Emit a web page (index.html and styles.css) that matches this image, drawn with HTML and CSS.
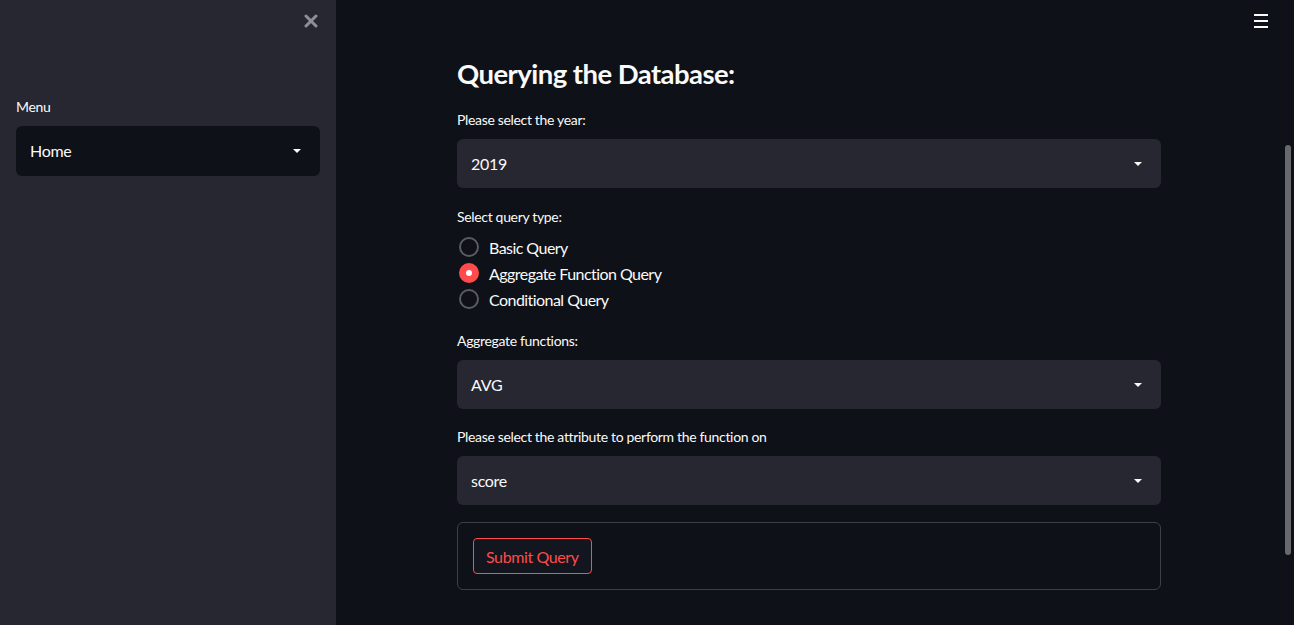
FILE: index.html
```html
<!DOCTYPE html>
<html>
<head>
<meta charset="utf-8">
<link rel="stylesheet" href="styles.css">
</head>
<body>
<div class="app">
  <aside class="sidebar">
    <div class="sidebar-top">
      <button class="close-btn" aria-label="Close sidebar">
        <svg width="14" height="14" viewBox="0 0 14 14"><path d="M2 2 L12 12 M12 2 L2 12" stroke="#8e9097" stroke-width="3" stroke-linecap="round"/></svg>
      </button>
    </div>
    <div class="field sidebar-field">
      <label class="label">Menu</label>
      <div class="select select-dark">
        <span class="select-value">Home</span>
        <span class="caret"></span>
      </div>
    </div>
  </aside>
  <main class="main">
    <div class="topbar">
      <button class="menu-btn" aria-label="Menu">
        <span></span><span></span><span></span>
      </button>
    </div>
    <div class="content">
      <h2 class="title">Querying the Database:</h2>
      <div class="field field-year">
        <label class="label">Please select the year:</label>
        <div class="select"><span class="select-value">2019</span><span class="caret"></span></div>
      </div>
      <div class="field field-radio">
        <label class="label">Select query type:</label>
        <div class="radio-group">
          <div class="radio"><span class="radio-dot"></span><span>Basic Query</span></div>
          <div class="radio checked"><span class="radio-dot"></span><span>Aggregate Function Query</span></div>
          <div class="radio"><span class="radio-dot"></span><span>Conditional Query</span></div>
        </div>
      </div>
      <div class="field">
        <label class="label">Aggregate functions:</label>
        <div class="select"><span class="select-value">AVG</span><span class="caret"></span></div>
      </div>
      <div class="field">
        <label class="label">Please select the attribute to perform the function on</label>
        <div class="select"><span class="select-value">score</span><span class="caret"></span></div>
      </div>
      <form class="form">
        <button type="button" class="submit">Submit Query</button>
      </form>
    </div>
    <div class="scroll-thumb"></div>
  </main>
</div>
</body>
</html>
```
FILE: styles.css
```css
* { box-sizing: border-box; }
html, body { margin: 0; padding: 0; height: 100%; }
body {
  font-family: "Lato", "Noto Sans", sans-serif;
  color: #fafafa;
  background: #0e1117;
  overflow: hidden;
}
.app { display: flex; height: 625px; }
.sidebar {
  width: 336px;
  flex: none;
  background: #262730;
  padding: 0 16px;
}
.sidebar-top {
  height: 97px;
  display: flex;
  justify-content: flex-end;
  align-items: flex-start;
  padding-top: 14px;
}
.close-btn {
  background: none; border: 0; padding: 0; margin-right: 2px;
  width: 14px; height: 14px; display: flex;
}
.field { display: flex; flex-direction: column; }
.label {
  font-size: 14px;
  line-height: 20px;
  height: 20px;
  margin-bottom: 9px;
  letter-spacing: -0.33px;
}
.select {
  height: 49px;
  background: #262730;
  border-radius: 6px;
  display: flex;
  align-items: center;
  justify-content: space-between;
  padding: 0 19px 0 14px;
  font-size: 16px;
  letter-spacing: -0.3px;
}
.select-dark { background: #0e1117; height: 50px; padding-bottom: 2px; }
.select-dark .caret { margin-top: 2px; }
.caret {
  width: 0; height: 0;
  border-left: 4px solid transparent;
  border-right: 4px solid transparent;
  border-top: 4px solid #fafafa;
}
.main {
  flex: 1;
  position: relative;
  display: flex;
  flex-direction: column;
  align-items: center;
  padding-right: 12px;
}
.topbar {
  align-self: stretch;
  display: flex;
  justify-content: flex-end;
  padding: 14px 14px 0 0;
  height: 57px;
}
.menu-btn {
  background: none; border: 0; padding: 0;
  width: 14px; height: 14px;
  display: flex; flex-direction: column; justify-content: space-between;
}
.menu-btn span { display: block; height: 2px; background: #fafafa; }
.content {
  width: 704px;
  display: flex;
  flex-direction: column;
}
.title {
  margin: 0 0 19px;
  font-size: 27.5px;
  line-height: 34px;
  font-weight: 700;
  letter-spacing: -0.55px;
}
.content .field { margin-bottom: 18px; }
.content .field-year { margin-bottom: 19px; }
.content .field-radio { margin-bottom: 19px; }
.content .field .label { margin-bottom: 9px; }
.radio-group { display: flex; flex-direction: column; margin-top: -2px; }
.radio {
  display: flex; align-items: center;
  height: 26px;
  font-size: 16px;
  gap: 10px;
  padding-left: 2px;
  letter-spacing: -0.55px;
}
.radio-dot {
  width: 20px; height: 20px;
  border-radius: 50%;
  border: 2px solid #5a5c62;
  display: flex; align-items: center; justify-content: center;
}
.radio.checked .radio-dot { background: #ff4b4b; border-color: #ff4b4b; }
.radio.checked .radio-dot::after {
  content: ""; width: 6px; height: 6px; border-radius: 50%; background: #fff;
}
.form {
  margin-top: -1px;
  border: 1px solid rgba(250,250,250,0.2);
  border-radius: 6px;
  padding: 15px;
  height: 68px;
}
.submit {
  height: 36px;
  padding: 0 12px;
  background: #13161e;
  color: #ff4b4b;
  border: 1px solid #ff4b4b;
  border-radius: 4px;
  font-family: inherit;
  font-size: 16px;
  letter-spacing: -0.4px;
}
.scroll-thumb {
  position: absolute;
  right: 3px;
  top: 145px;
  width: 6px;
  height: 410px;
  border-radius: 3px;
  background: #68696e;
}
```
